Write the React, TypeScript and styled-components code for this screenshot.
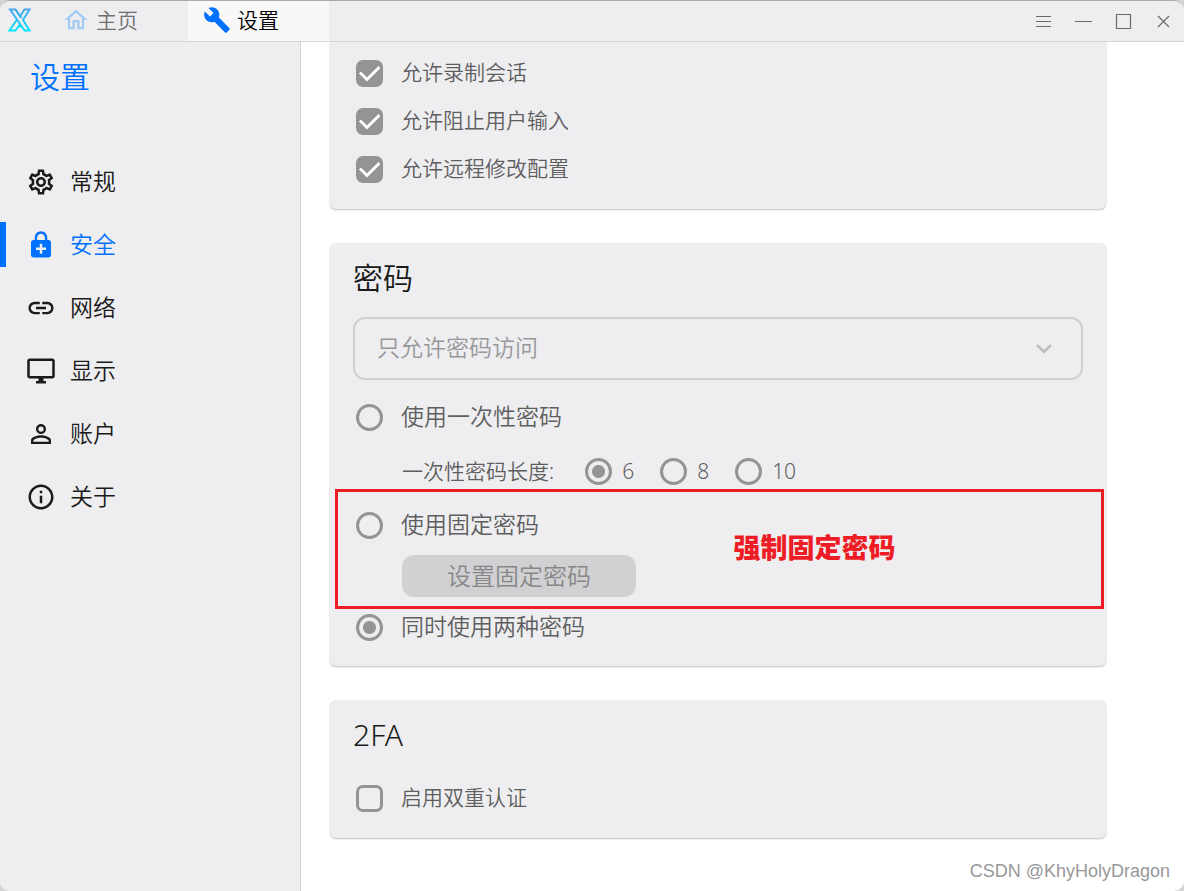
import React from 'react';
import styled, { createGlobalStyle } from 'styled-components';
import {
  MdBuild,
  MdEnhancedEncryption,
  MdInfoOutline,
  MdLink,
  MdOutlineDesktopWindows,
  MdOutlineHome,
  MdOutlineSettings,
  MdPersonOutline,
} from 'react-icons/md';

const blue = '#0071ff';
const panel = '#eeeef0';
const grey = '#949496';

const GlobalStyle = createGlobalStyle`
  *, *::before, *::after { box-sizing: border-box; }
  body {
    margin: 0;
    background: #d4d4d6;
    color: #1a1a1a;
    font-family: "Noto Sans", "Noto Sans CJK SC", sans-serif;
    font-weight: 350;
  }
  button, input, select { font: inherit; color: inherit; }
  h1, h2 { margin: 0; font-weight: 350; }
  svg { display: block; flex: none; }
`;

const Window = styled.div`
  position: relative;
  display: flex;
  flex-direction: column;
  min-height: 100vh;
  background: #fff;
  border-top: 1px solid #a9a9ab;
  border-radius: 10px;
  overflow: hidden;
`;

const TitleBar = styled.header`
  display: flex;
  height: 41px;
  background: ${panel};
  border-bottom: 1px solid #d6d6d8;
`;

const LogoBox = styled.div`
  display: flex;
  align-items: center;
  width: 47px;
  padding: 0 0 2px 7px;
`;

const Tab = styled.button<{ $active?: boolean }>`
  display: flex;
  align-items: center;
  gap: 6px;
  padding: 0 50px 2px 15px;
  border: 0;
  background: ${(p) => (p.$active ? '#f8f8f8' : 'transparent')};
  color: ${(p) => (p.$active ? '#000' : '#707070')};
  font-size: 21px;
  line-height: 30px;

  svg { color: ${(p) => (p.$active ? blue : '#a3cbf3')}; }
`;

const WindowButtons = styled.div`
  display: flex;
  margin-left: auto;
  padding-right: 1px;
`;

const WindowButton = styled.button`
  display: flex;
  align-items: center;
  justify-content: center;
  width: 40px;
  padding: 0;
  border: 0;
  background: transparent;
  color: #6a6a6a;
`;

const Body = styled.div`
  display: flex;
  flex: 1;
`;

const Sidebar = styled.nav`
  flex: none;
  width: 301px;
  background: ${panel};
  border-right: 1px solid #d6d6d8;
`;

const SidebarTitle = styled.h1`
  padding: 12px 30px 0;
  color: ${blue};
  font-size: 30px;
  line-height: 45px;
`;

const NavList = styled.ul`
  margin: 51px 0 0;
  padding: 0;
  list-style: none;
`;

const NavLink = styled.a<{ $active?: boolean }>`
  display: flex;
  align-items: center;
  height: 63px;
  color: ${(p) => (p.$active ? blue : '#1a1a1a')};
  font-size: 23px;
  line-height: 34px;
  text-decoration: none;

  &::before {
    content: '';
    width: 6px;
    height: 45px;
    margin-right: 20px;
    background: ${(p) => (p.$active ? blue : 'transparent')};
  }

  svg { margin-right: 14px; }
`;

const Label = styled.span`
  padding-bottom: 2px;
`;

const Main = styled.main`
  display: flex;
  flex: 1;
  flex-direction: column;
  gap: 34px;
  min-width: 0;
  padding: 0 78px 53px 29px;
`;

const Card = styled.section<{ $continued?: boolean; $tight?: boolean }>`
  padding: ${(p) => (p.$continued ? '7px' : '12px')} 23px ${(p) => (p.$tight ? '12px' : '16px')};
  background: ${panel};
  border-radius: ${(p) => (p.$continued ? '0 0 6px 6px' : '6px')};
  box-shadow: 0 1px 2px rgba(0, 0, 0, 0.26);
`;

const CardTitle = styled.h2`
  margin-bottom: 17px;
  font-size: 30px;
  line-height: 45px;
`;

const OptionRow = styled.label<{ $large?: boolean }>`
  display: flex;
  align-items: center;
  gap: 18px;
  height: ${(p) => (p.$large ? '54px' : '48px')};
  padding-left: 3px;
  color: #5e5e60;
  font-size: ${(p) => (p.$large ? '23px' : '21px')};
  line-height: 32px;
`;

const Tick = styled.span`
  display: grid;
  width: 27px;
  height: 27px;

  > * { grid-area: 1 / 1; }
  svg { pointer-events: none; }
`;

const TickBox = styled.input`
  appearance: none;
  width: 27px;
  height: 27px;
  margin: 0;
  border: 3px solid ${grey};
  border-radius: 7px;

  &:checked { background: ${grey}; }
  &:not(:checked) + svg { visibility: hidden; }
`;

const RadioDot = styled.input`
  appearance: none;
  flex: none;
  width: 27px;
  height: 27px;
  margin: 0;
  border: 3px solid ${grey};
  border-radius: 50%;

  &:checked { background: radial-gradient(circle, ${grey} 6px, transparent 7px); }
`;

const SelectFrame = styled.div`
  display: grid;
  align-items: center;
  margin-bottom: 10px;
  color: #bdbdbf;

  > * { grid-area: 1 / 1; }
  svg {
    justify-self: end;
    margin-right: 31px;
    pointer-events: none;
  }
`;

const Select = styled.select`
  appearance: none;
  width: 100%;
  height: 63px;
  padding: 0 60px 3px 22px;
  border: 2px solid #d0d0d2;
  border-radius: 12px;
  background: transparent;
  color: #98989a;
  font-size: 23px;
`;

const LengthRow = styled.fieldset`
  display: flex;
  align-items: center;
  gap: 26px;
  height: 54px;
  margin: 0;
  padding: 0 0 0 49px;
  border: 0;
  color: #5e5e60;
  font-size: 21px;
  line-height: 32px;
`;

const LengthCaption = styled.span`
  margin-right: 5px;
`;

const LengthChoice = styled.label`
  display: flex;
  align-items: center;
  gap: 10px;
`;

const FixedGroup = styled.div`
  position: relative;
  padding-bottom: 3px;
`;

const SetButton = styled.button`
  display: block;
  width: 234px;
  height: 42px;
  margin: 3px 0 0 49px;
  padding: 0;
  border: 0;
  border-radius: 12px;
  background: #d1d1d3;
  color: #878789;
  font-size: 24px;
  line-height: 36px;
`;

const Highlight = styled.div`
  position: absolute;
  top: -9px;
  right: -21px;
  bottom: -9px;
  left: -18px;
  display: flex;
  align-items: center;
  justify-content: center;
  padding: 0 0 2px 190px;
  border: 3px solid #ee1c25;
  color: #ee1c25;
  font-size: 27px;
  font-weight: 900;
  line-height: 40px;
  pointer-events: none;
`;

const Watermark = styled.div`
  position: absolute;
  right: 14px;
  bottom: 7px;
  color: #98989a;
  font-family: "Liberation Sans", sans-serif;
  font-size: 18px;
  font-weight: 400;
  line-height: 26px;
`;

const Logo = () => (
  <svg width="26" height="26" viewBox="0 0 26 26" fill="none" stroke="url(#logo-tint)" strokeWidth="2">
    <defs>
      <linearGradient id="logo-tint" x1="0" y1="1" x2="0" y2="25" gradientUnits="userSpaceOnUse">
        <stop offset="0" stopColor="#4f9fee" />
        <stop offset="1" stopColor="#00eaff" />
      </linearGradient>
    </defs>
    <path d="M3 2.500H8.500L13 9.500L17.500 2.500H22.500L16 13L22.500 23.500H17.500L10 12.500Z" />
    <path d="M10 12.500L2.500 23.500H8.500L12.500 18L14 20.500M8.500 2.500L14.500 11" />
  </svg>
);

const navItems = [
  { label: '常规', Icon: MdOutlineSettings },
  { label: '安全', Icon: MdEnhancedEncryption, active: true },
  { label: '网络', Icon: MdLink },
  { label: '显示', Icon: MdOutlineDesktopWindows },
  { label: '账户', Icon: MdPersonOutline },
  { label: '关于', Icon: MdInfoOutline },
];

const windowActions = [
  { label: '菜单', path: 'M1 3.500H16M1 8.500H16M1 13.500H16' },
  { label: '最小化', path: 'M0 8.500H17' },
  { label: '最大化', path: 'M1.500 1.500H15.500V15.500H1.500Z' },
  { label: '关闭', path: 'M3 3L14 14M14 3L3 14' },
];

const CheckOption = ({ label, checked }: { label: string; checked?: boolean }) => (
  <OptionRow>
    <Tick>
      <TickBox type="checkbox" defaultChecked={checked} />
      <svg width="27" height="27" viewBox="0 0 27 27" fill="none" stroke="#fff" strokeWidth="3">
        <path d="M4 12.500L11 19.500L23.500 7" />
      </svg>
    </Tick>
    <Label>{label}</Label>
  </OptionRow>
);

const MethodOption = ({ label, checked }: { label: string; checked?: boolean }) => (
  <OptionRow $large>
    <RadioDot type="radio" name="method" defaultChecked={checked} />
    <Label>{label}</Label>
  </OptionRow>
);

export default function App() {
  return (
    <>
      <GlobalStyle />
      <Window>
        <TitleBar>
          <LogoBox><Logo /></LogoBox>
          <Tab><MdOutlineHome size={28} />主页</Tab>
          <Tab $active><MdBuild size={28} />设置</Tab>
          <WindowButtons>
            {windowActions.map(({ label, path }) => (
              <WindowButton key={label} aria-label={label}>
                <svg width="17" height="17" viewBox="0 0 17 17" fill="none" stroke="currentColor" strokeWidth="1.200">
                  <path d={path} />
                </svg>
              </WindowButton>
            ))}
          </WindowButtons>
        </TitleBar>
        <Body>
          <Sidebar>
            <SidebarTitle>设置</SidebarTitle>
            <NavList>
              {navItems.map(({ label, Icon, active }) => (
                <li key={label}>
                  <NavLink href="#" $active={active}><Icon size={30} /><Label>{label}</Label></NavLink>
                </li>
              ))}
            </NavList>
          </Sidebar>
          <Main>
            <Card $continued>
              <CheckOption label="允许录制会话" checked />
              <CheckOption label="允许阻止用户输入" checked />
              <CheckOption label="允许远程修改配置" checked />
            </Card>
            <Card $tight>
              <CardTitle>密码</CardTitle>
              <SelectFrame>
                <Select aria-label="访问方式">
                  <option>只允许密码访问</option>
                </Select>
                <svg width="16" height="10" viewBox="0 0 16 10" fill="none" stroke="currentColor" strokeWidth="2.500">
                  <path d="M1 1L8 8L15 1" />
                </svg>
              </SelectFrame>
              <MethodOption label="使用一次性密码" />
              <LengthRow>
                <LengthCaption>一次性密码长度:</LengthCaption>
                {['6', '8', '10'].map((n) => (
                  <LengthChoice key={n}>
                    <RadioDot type="radio" name="length" defaultChecked={n === '6'} />
                    {n}
                  </LengthChoice>
                ))}
              </LengthRow>
              <FixedGroup>
                <MethodOption label="使用固定密码" />
                <SetButton>设置固定密码</SetButton>
                <Highlight>强制固定密码</Highlight>
              </FixedGroup>
              <MethodOption label="同时使用两种密码" checked />
            </Card>
            <Card>
              <CardTitle>2FA</CardTitle>
              <CheckOption label="启用双重认证" />
            </Card>
          </Main>
        </Body>
        <Watermark>CSDN @KhyHolyDragon</Watermark>
      </Window>
    </>
  );
}
